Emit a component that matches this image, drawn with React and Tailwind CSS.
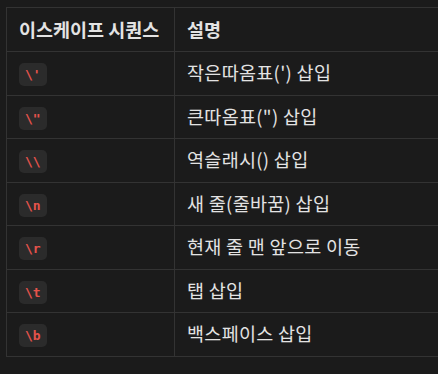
const rows = [
  ["\\'", "작은따옴표(') 삽입"],
  ['\\"', '큰따옴표(") 삽입'],
  ["\\\\", "역슬래시() 삽입"],
  ["\\n", "새 줄(줄바꿈) 삽입"],
  ["\\r", "현재 줄 맨 앞으로 이동"],
  ["\\t", "탭 삽입"],
  ["\\b", "백스페이스 삽입"],
];

export default function App() {
  return (
    <div
      className="h-[374px] w-[438px] overflow-hidden bg-[#1b1b1b] pl-[6px] pt-[7px]"
      style={{ fontFamily: '"Noto Sans CJK KR", "Noto Sans", sans-serif' }}
    >
      <table className="w-[480px] border-collapse text-[#e3e3e3]">
        <thead>
          <tr className="h-[44px]">
            <th className="w-[168px] border border-[#333] pl-[12px] text-left text-[18.5px] font-bold text-[#e3e3e3]">
              이스케이프 시퀀스
            </th>
            <th className="border border-[#333] pl-[12px] text-left text-[18.5px] font-bold text-[#e3e3e3]">설명</th>
          </tr>
        </thead>
        <tbody>
          {rows.map(([code, desc]) => (
            <tr key={code} className="h-[43.5px]">
              <td className="border border-[#333] pl-[12px]">
                <code
                  className="inline-block rounded-[5px] bg-[#2b2b2b] px-[6px] py-[3px] text-[13px] leading-[17px] font-bold text-[#e5534b]"
                  style={{ fontFamily: '"DejaVu Sans Mono", monospace' }}
                >
                  {code}
                </code>
              </td>
              <td className="border border-[#333] pl-[12px] text-[18.5px] tracking-[0.3px] text-[#e3e3e3]">{desc}</td>
            </tr>
          ))}
        </tbody>
      </table>
    </div>
  );
}
